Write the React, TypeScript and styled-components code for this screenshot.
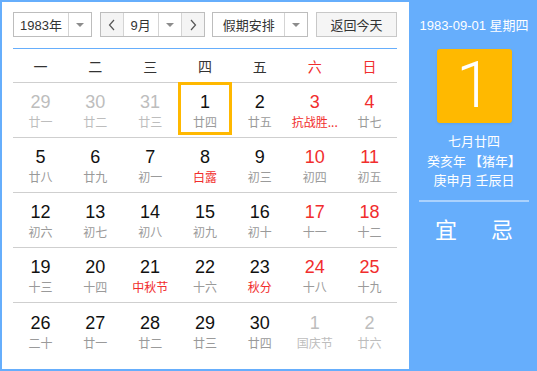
import React from "react";
import styled, { createGlobalStyle } from "styled-components";

const Global = createGlobalStyle`
  html, body { margin: 0; padding: 0; background: #fff; }
  body { font-family: "Liberation Sans", "Noto Sans CJK SC", sans-serif; }
  * { box-sizing: border-box; }
`;

const BLUE = "#66aefc";
const RED = "#f12d2d";

const Frame = styled.div`
  width: 537px;
  height: 371px;
  border: 2px solid ${BLUE};
  display: flex;
`;

const Main = styled.div`
  width: 407px;
  background: #fff;
  padding: 10px 12px 0 11px;
  display: flex;
  flex-direction: column;
`;

const Toolbar = styled.div`
  display: flex;
  justify-content: space-between;
  height: 25px;
  margin-bottom: 11px;
  font-size: 13px;
  color: #333;
`;

const Select = styled.div<{ $w: number }>`
  width: ${(p) => p.$w}px;
  height: 25px;
  border: 1px solid #bdbdbd;
  background: #fff;
  display: flex;
  align-items: stretch;
`;

const SelectText = styled.div`
  flex: 1;
  display: flex;
  align-items: center;
  justify-content: center;
  font-family: "Liberation Sans", "Noto Sans CJK SC", sans-serif;
`;

const Arrow = styled.div`
  width: 23px;
  border-left: 1px solid #d4d4d4;
  display: flex;
  align-items: center;
  justify-content: center;
  &::after {
    content: "";
    border-left: 4px solid transparent;
    border-right: 4px solid transparent;
    border-top: 4px solid #8c8c8c;
  }
`;

const NavBtn = styled.div`
  width: 23px;
  background: #f4f4f4;
  display: flex;
  align-items: center;
  justify-content: center;
  color: #555;
  &:first-child { border-right: 1px solid #d4d4d4; }
  &:last-child { border-left: 1px solid #d4d4d4; }
`;

const Button = styled.div`
  width: 81px;
  height: 25px;
  border: 1px solid #c8c8c8;
  background: #f5f5f5;
  display: flex;
  align-items: center;
  justify-content: center;
  color: #333;
`;

const Table = styled.div`
  border-top: 1px solid ${BLUE};
  display: flex;
  flex-direction: column;
`;

const Row = styled.div<{ $h: number; $line?: boolean }>`
  display: grid;
  grid-template-columns: repeat(7, 1fr);
  height: ${(p) => p.$h}px;
  border-bottom: ${(p) => (p.$line ? "1px solid #cfcfcf" : "none")};
`;

const Week = styled.div<{ $red?: boolean }>`
  display: flex;
  align-items: center;
  justify-content: center;
  font-family: "Noto Sans CJK SC", sans-serif;
  font-size: 14px;
  color: ${(p) => (p.$red ? RED : "#333")};
`;

const Cell = styled.div<{ $sel?: boolean }>`
  position: relative;
  display: flex;
  flex-direction: column;
  align-items: center;
  justify-content: center;
  padding-top: 2px;
  &::after {
    content: "";
    display: ${(p) => (p.$sel ? "block" : "none")};
    position: absolute;
    left: 0;
    right: 0;
    top: -1px;
    bottom: 2px;
    border: 3px solid #ffb800;
  }
`;

const Num = styled.div<{ $c: string }>`
  font-family: "Liberation Sans", Arial, sans-serif;
  font-size: 18px;
  line-height: 20px;
  color: ${(p) => p.$c};
`;

const Lunar = styled.div<{ $c: string }>`
  font-family: "Noto Sans CJK SC", sans-serif;
  font-size: 12px;
  line-height: 16px;
  margin-top: 2px;
  color: ${(p) => p.$c};
  white-space: nowrap;
`;

const Side = styled.div`
  flex: 1;
  background: ${BLUE};
  color: #fff;
  display: flex;
  flex-direction: column;
  align-items: center;
  padding-top: 15px;
  padding-left: 4px;
  font-family: "Noto Sans CJK SC", sans-serif;
`;

const DateLine = styled.div`
  font-size: 13px;
  line-height: 18px;
  font-family: "Liberation Sans", "Noto Sans CJK SC", sans-serif;
`;

const BigDay = styled.div`
  margin-top: 14px;
  width: 75px;
  height: 74px;
  background: #ffb900;
  border-radius: 3px;
  display: flex;
  align-items: center;
  justify-content: center;
  font-family: Roboto, "Liberation Sans", sans-serif;
  font-size: 64px;
  font-weight: 300;
  line-height: 1;
  box-shadow: 0 1px 3px rgba(0, 0, 0, 0.08);
`;

const Info = styled.div`
  margin-top: 8px;
  font-size: 13px;
  line-height: 19.5px;
  text-align: center;
`;

const Sep = styled.div`
  margin-top: 10px;
  width: 110px;
  height: 2px;
  background: rgba(255, 255, 255, 0.45);
`;

const YiJi = styled.div`
  margin-top: 12px;
  display: flex;
  gap: 34px;
  font-size: 22px;
  line-height: 28px;
`;

type D = { n: number; l: string; nc?: string; lc?: string; sel?: boolean };

const G = "#bdbdbd";
const K = "#111";
const LG = "#9a9a9a";

const rows: D[][] = [
  [
    { n: 29, l: "廿一", nc: G, lc: G },
    { n: 30, l: "廿二", nc: G, lc: G },
    { n: 31, l: "廿三", nc: G, lc: G },
    { n: 1, l: "廿四", sel: true },
    { n: 2, l: "廿五" },
    { n: 3, l: "抗战胜...", nc: RED, lc: RED },
    { n: 4, l: "廿七", nc: RED },
  ],
  [
    { n: 5, l: "廿八" },
    { n: 6, l: "廿九" },
    { n: 7, l: "初一" },
    { n: 8, l: "白露", lc: RED },
    { n: 9, l: "初三" },
    { n: 10, l: "初四", nc: RED },
    { n: 11, l: "初五", nc: RED },
  ],
  [
    { n: 12, l: "初六" },
    { n: 13, l: "初七" },
    { n: 14, l: "初八" },
    { n: 15, l: "初九" },
    { n: 16, l: "初十" },
    { n: 17, l: "十一", nc: RED },
    { n: 18, l: "十二", nc: RED },
  ],
  [
    { n: 19, l: "十三" },
    { n: 20, l: "十四" },
    { n: 21, l: "中秋节", lc: RED },
    { n: 22, l: "十六" },
    { n: 23, l: "秋分", lc: RED },
    { n: 24, l: "十八", nc: RED },
    { n: 25, l: "十九", nc: RED },
  ],
  [
    { n: 26, l: "二十" },
    { n: 27, l: "廿一" },
    { n: 28, l: "廿二" },
    { n: 29, l: "廿三" },
    { n: 30, l: "廿四" },
    { n: 1, l: "国庆节", nc: G, lc: G },
    { n: 2, l: "廿六", nc: G, lc: G },
  ],
];

const weeks = ["一", "二", "三", "四", "五", "六", "日"];

const Chevron = ({ dir }: { dir: "l" | "r" }) => (
  <svg width="8" height="12" viewBox="0 0 8 12">
    <path
      d={dir === "l" ? "M6 1 L1.5 6 L6 11" : "M2 1 L6.5 6 L2 11"}
      fill="none"
      stroke="#555"
      strokeWidth="1.2"
    />
  </svg>
);

export default function App() {
  return (
    <>
      <Global />
      <Frame>
        <Main>
          <Toolbar>
            <Select $w={79}>
              <SelectText>1983年</SelectText>
              <Arrow />
            </Select>
            <Select $w={105}>
              <NavBtn>
                <Chevron dir="l" />
              </NavBtn>
              <SelectText>9月</SelectText>
              <Arrow />
              <NavBtn>
                <Chevron dir="r" />
              </NavBtn>
            </Select>
            <Select $w={96}>
              <SelectText>假期安排</SelectText>
              <Arrow />
            </Select>
            <Button>返回今天</Button>
          </Toolbar>
          <Table>
            <Row $h={34} $line>
              {weeks.map((w, i) => (
                <Week key={w} $red={i >= 5}>
                  {w}
                </Week>
              ))}
            </Row>
            {rows.map((r, i) => (
              <Row key={i} $h={55} $line={i < rows.length - 1}>
                {r.map((d, j) => (
                  <Cell key={j} $sel={d.sel}>
                    <Num $c={d.nc ?? K}>{d.n}</Num>
                    <Lunar $c={d.lc ?? LG}>{d.l}</Lunar>
                  </Cell>
                ))}
              </Row>
            ))}
          </Table>
        </Main>
        <Side>
          <DateLine>1983-09-01 星期四</DateLine>
          <BigDay>1</BigDay>
          <Info>
            <div>七月廿四</div>
            <div>癸亥年 【猪年】</div>
            <div>庚申月 壬辰日</div>
          </Info>
          <Sep />
          <YiJi>
            <span>宜</span>
            <span>忌</span>
          </YiJi>
        </Side>
      </Frame>
    </>
  );
}
